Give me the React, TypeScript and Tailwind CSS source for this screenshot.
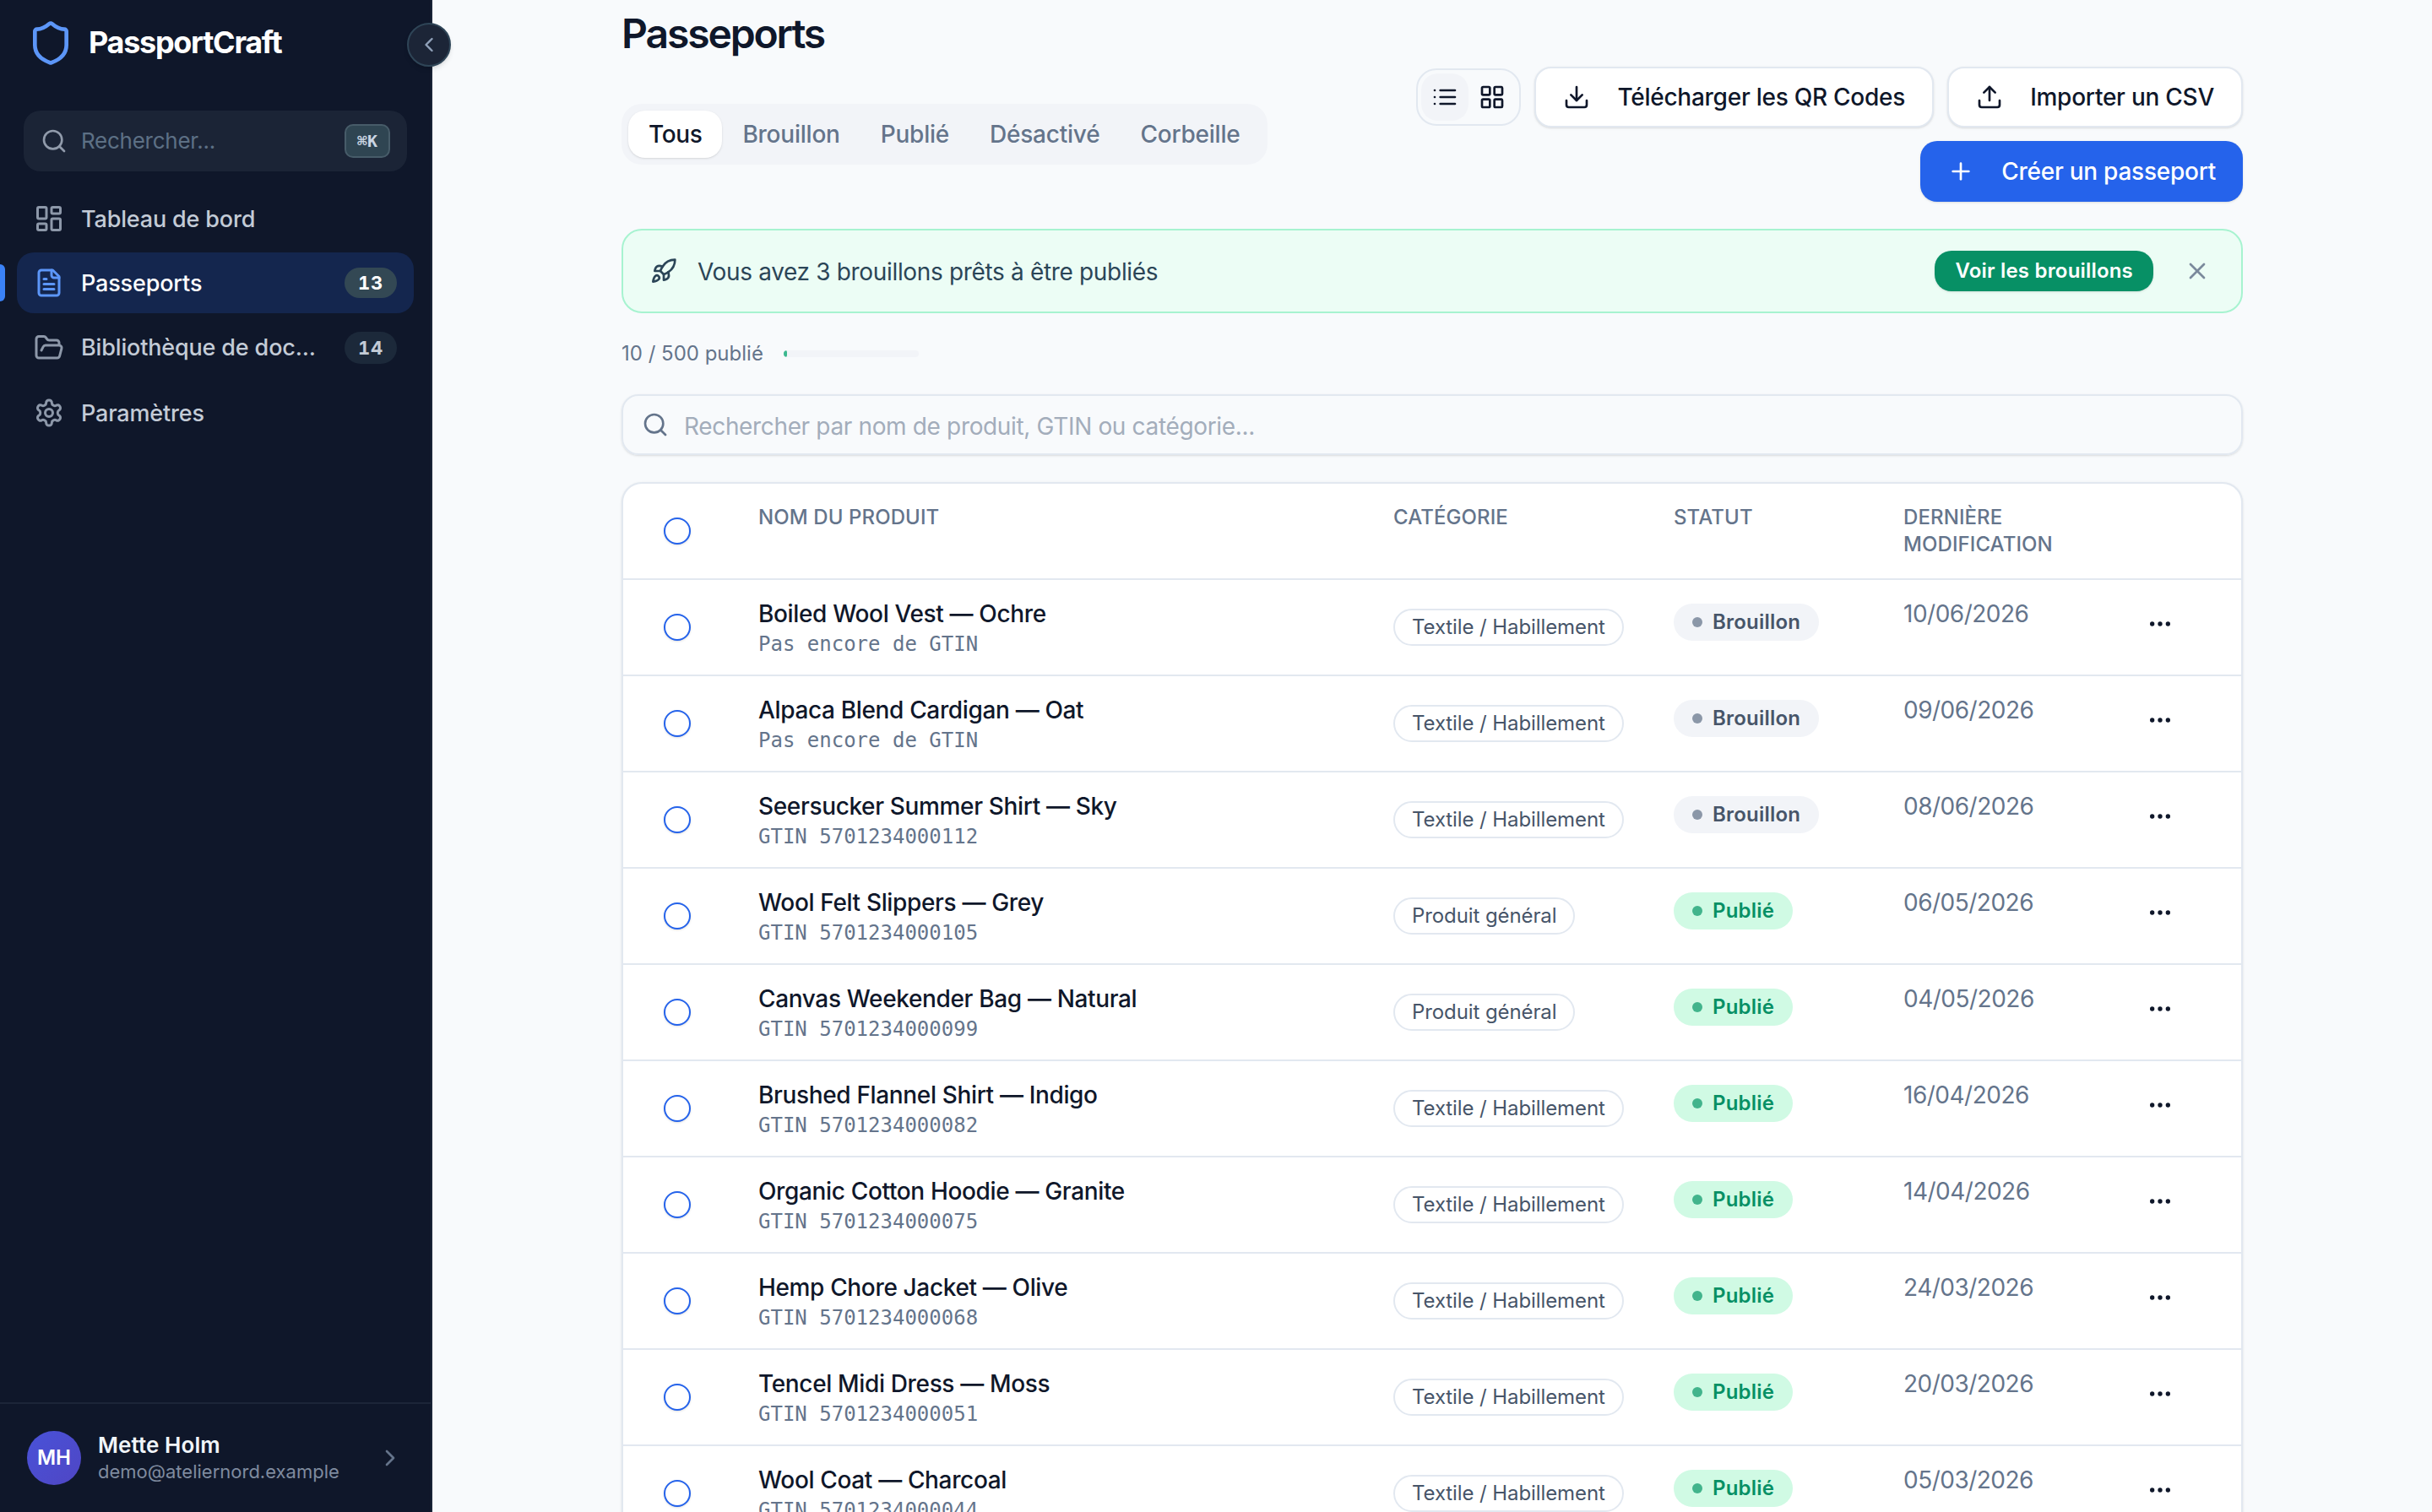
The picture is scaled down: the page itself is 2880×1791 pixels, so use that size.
import type { SVGProps } from "react";
import {
  ChevronLeft,
  ChevronRight,
  Download,
  Ellipsis,
  FolderOpen,
  LayoutDashboard,
  LayoutGrid,
  Plus,
  Rocket,
  Search,
  Shield,
  Upload,
  X,
} from "lucide-react";
import clsx from "clsx";

interface NavItem {
  label: string;
  icon: React.ElementType;
  count?: number;
  active?: boolean;
  tall?: boolean;
}

interface Passport {
  name: string;
  gtin?: string;
  category: string;
  published: boolean;
  updatedAt: string;
}

function StrokeIcon(props: SVGProps<SVGSVGElement>) {
  return (
    <svg
      viewBox="0 0 24 24"
      fill="none"
      stroke="currentColor"
      strokeWidth="2"
      strokeLinecap="round"
      strokeLinejoin="round"
      {...props}
    />
  );
}

function ListIcon({ className }: { className?: string }) {
  return (
    <StrokeIcon className={className}>
      <path d="M8 6h13M8 12h13M8 18h13M3 6h.01M3 12h.01M3 18h.01" />
    </StrokeIcon>
  );
}

function FileTextIcon({ className }: { className?: string }) {
  return (
    <StrokeIcon className={className}>
      <path d="M15 2H6a2 2 0 0 0-2 2v16a2 2 0 0 0 2 2h12a2 2 0 0 0 2-2V7Z" />
      <path d="M14 2v4a2 2 0 0 0 2 2h4M10 9H8M16 13H8M16 17H8" />
    </StrokeIcon>
  );
}

function SettingsIcon({ className }: { className?: string }) {
  return (
    <StrokeIcon className={className}>
      <path d="M12.22 2h-.44a2 2 0 0 0-2 2v.18a2 2 0 0 1-1 1.73l-.43.25a2 2 0 0 1-2 0l-.15-.08a2 2 0 0 0-2.73.73l-.22.38a2 2 0 0 0 .73 2.73l.15.1a2 2 0 0 1 1 1.72v.51a2 2 0 0 1-1 1.74l-.15.09a2 2 0 0 0-.73 2.73l.22.38a2 2 0 0 0 2.73.73l.15-.08a2 2 0 0 1 2 0l.43.25a2 2 0 0 1 1 1.73V20a2 2 0 0 0 2 2h.44a2 2 0 0 0 2-2v-.18a2 2 0 0 1 1-1.73l.43-.25a2 2 0 0 1 2 0l.15.08a2 2 0 0 0 2.73-.73l.22-.39a2 2 0 0 0-.73-2.73l-.15-.08a2 2 0 0 1-1-1.74v-.5a2 2 0 0 1 1-1.74l.15-.09a2 2 0 0 0 .73-2.73l-.22-.38a2 2 0 0 0-2.73-.73l-.15.08a2 2 0 0 1-2 0l-.43-.25a2 2 0 0 1-1-1.73V4a2 2 0 0 0-2-2z" />
      <circle cx="12" cy="12" r="3" />
    </StrokeIcon>
  );
}

const TEXTILE = "Textile / Habillement";
const GENERAL = "Produit général";

const navItems: NavItem[] = [
  { label: "Tableau de bord", icon: LayoutDashboard },
  { label: "Passeports", icon: FileTextIcon, count: 13, active: true },
  { label: "Bibliothèque de doc...", icon: FolderOpen, count: 14, tall: true },
  { label: "Paramètres", icon: SettingsIcon },
];

const tabs = ["Tous", "Brouillon", "Publié", "Désactivé", "Corbeille"];

const passports: Passport[] = [
  { name: "Boiled Wool Vest — Ochre", category: TEXTILE, published: false, updatedAt: "10/06/2026" },
  { name: "Alpaca Blend Cardigan — Oat", category: TEXTILE, published: false, updatedAt: "09/06/2026" },
  { name: "Seersucker Summer Shirt — Sky", gtin: "5701234000112", category: TEXTILE, published: false, updatedAt: "08/06/2026" },
  { name: "Wool Felt Slippers — Grey", gtin: "5701234000105", category: GENERAL, published: true, updatedAt: "06/05/2026" },
  { name: "Canvas Weekender Bag — Natural", gtin: "5701234000099", category: GENERAL, published: true, updatedAt: "04/05/2026" },
  { name: "Brushed Flannel Shirt — Indigo", gtin: "5701234000082", category: TEXTILE, published: true, updatedAt: "16/04/2026" },
  { name: "Organic Cotton Hoodie — Granite", gtin: "5701234000075", category: TEXTILE, published: true, updatedAt: "14/04/2026" },
  { name: "Hemp Chore Jacket — Olive", gtin: "5701234000068", category: TEXTILE, published: true, updatedAt: "24/03/2026" },
  { name: "Tencel Midi Dress — Moss", gtin: "5701234000051", category: TEXTILE, published: true, updatedAt: "20/03/2026" },
  { name: "Wool Coat — Charcoal", gtin: "5701234000044", category: TEXTILE, published: true, updatedAt: "05/03/2026" },
];

function Sidebar() {
  return (
    <aside className="relative flex h-full w-[512px] shrink-0 flex-col border-r-2 border-[#1a2437] bg-[#0f172a]">
      <div className="flex h-[102px] items-center gap-[17px] pl-8">
        <Shield className="size-14 text-[#5c96f8]" />
        <span className="pb-0.5 text-[36px] font-bold tracking-[-0.036em] text-white">PassportCraft</span>
      </div>
      <button className="absolute top-[27px] -right-6 flex size-[52px] items-center justify-center rounded-full border-2 border-[#2f4557] bg-[#1c2537] text-slate-400 shadow-md">
        <ChevronLeft className="size-7" />
      </button>

      <div className="mt-[29px] mr-7 ml-7 flex h-[72px] items-center gap-4 rounded-[20px] bg-[#1b2436] px-5">
        <Search className="size-8 text-[#919bab]" />
        <span className="flex-1 pb-0.5 text-[26px] tracking-[-0.01em] text-[#5d7085]">Rechercher...</span>
        <kbd className="flex h-10 w-[54px] items-center justify-center rounded-[10px] border-2 border-[#475c69] bg-[#2f4552] font-['DejaVu_Sans_Mono',monospace] text-[20px] font-bold text-slate-300">
          ⌘K
        </kbd>
      </div>

      <nav className="mt-5 flex flex-col gap-1 px-5">
        {navItems.map(({ label, icon: Icon, count, active, tall }) => (
          <a
            key={label}
            className={clsx(
              "relative flex items-center gap-5 rounded-[20px] px-5 text-[27px] font-medium tracking-[-0.006em]",
              tall ? "h-[74px]" : "h-[72px]",
              active ? "bg-[#14264e] text-white" : "text-[#c3cbd6]",
            )}
          >
            {active && <span className="absolute top-[14px] -left-5 h-11 w-1.5 rounded-r-md bg-[#3b82f6]" />}
            <Icon className={clsx("size-9 shrink-0", active ? "text-[#5c96f8]" : "text-[#8d98a9]")} />
            <span className={clsx("flex-1 whitespace-nowrap", tall ? "pt-px" : "pt-[3px]")}>{label}</span>
            {count !== undefined && (
              <span
                className={clsx(
                  "flex w-[62px] shrink-0 items-center justify-center rounded-full text-[22px] font-bold tracking-[0.03em] tabular-nums",
                  active ? "h-9 bg-[#334854] text-white" : "h-[38px] bg-[#1c293a] text-[#c3cbd6]",
                )}
              >
                {count}
              </span>
            )}
          </a>
        ))}
      </nav>

      <div className="mt-auto flex h-[130px] items-center gap-5 border-t-2 border-[#1c2538] pr-8 pl-8">
        <div className="flex size-16 items-center justify-center rounded-full bg-linear-to-br from-[#4852d8] to-[#4f46c4] text-[24px] font-semibold text-white">
          MH
        </div>
        <div className="flex-1">
          <div className="text-[26px] leading-[32px] font-semibold tracking-[0.003em] text-slate-100">Mette Holm</div>
          <div className="text-[22px] leading-[30px] text-[#7f8b9f]">demo@ateliernord.example</div>
        </div>
        <ChevronRight className="size-8 text-[#64748b]" />
      </div>
    </aside>
  );
}

function Toolbar() {
  const outline =
    "flex h-[72px] items-center gap-8 rounded-[20px] border-2 border-slate-200 bg-white px-8 text-[28px] font-medium tracking-[-0.009em] text-[#0f172a] shadow-sm";

  return (
    <div className="flex flex-col items-end gap-4">
      <div className="flex items-center gap-4">
        <div className="flex rounded-3xl border-2 border-slate-200 p-1 text-[#0f172a]">
          <button className="flex size-14 items-center justify-center rounded-[20px] bg-[#f2f4f8]">
            <ListIcon className="size-8" />
          </button>
          <button className="flex size-14 items-center justify-center rounded-[20px]">
            <LayoutGrid className="size-8" />
          </button>
        </div>
        <button className={outline}>
          <Download className="size-8" />
          Télécharger les QR Codes
        </button>
        <button className={outline}>
          <Upload className="size-8" />
          Importer un CSV
        </button>
      </div>
      <button className="flex h-[72px] items-center gap-8 rounded-[20px] bg-[#2563eb] px-8 text-[28px] font-medium tracking-[-0.009em] text-white shadow-sm">
        <Plus className="size-8" />
        Créer un passeport
      </button>
    </div>
  );
}

function StatusBadge({ published }: { published: boolean }) {
  return (
    <span
      className={clsx(
        "flex h-11 w-fit items-center gap-3 rounded-full px-[22px] text-[24px] font-semibold tracking-[0.009em]",
        published ? "bg-[#d0fae4] text-[#079065]" : "bg-[#f2f4f8] text-[#475569]",
      )}
    >
      <span className={clsx("size-3 rounded-full", published ? "bg-[#42b48c]" : "bg-[#8b97a8]")} />
      {published ? "Publié" : "Brouillon"}
    </span>
  );
}

const columns = "grid grid-cols-[160px_752px_332px_272px_288px_1fr]";
const checkbox = "size-8 rounded-full border-2 border-[#2563eb] bg-white shadow-sm";

function PassportTable() {
  return (
    <div className="mt-8 overflow-hidden rounded-t-3xl border-2 border-b-0 border-slate-200 bg-white shadow-sm">
      <div
        className={clsx(
          columns,
          "h-[114px] border-b-2 border-slate-200 pt-6 text-[24px] leading-[32px] font-medium tracking-[0.004em] text-[#64748b] uppercase",
        )}
      >
        <div className="pt-4 pl-12">
          <div className={checkbox} />
        </div>
        <div>Nom du produit</div>
        <div>Catégorie</div>
        <div>Statut</div>
        <div>
          Dernière
          <br />
          modification
        </div>
      </div>
      {passports.map((p) => (
        <div key={p.name} className={clsx(columns, "h-[114px] border-b-2 border-slate-200")}>
          <div className="pt-10 pl-12">
            <div className={checkbox} />
          </div>
          <div className="pt-5">
            <div className="text-[28px] leading-[40px] font-medium tracking-[-0.0125em] text-[#0f172a]">{p.name}</div>
            <div className="font-['DejaVu_Sans_Mono',monospace] text-[24px] leading-[32px] text-[#64748b]">
              {p.gtin ? `GTIN ${p.gtin}` : "Pas encore de GTIN"}
            </div>
          </div>
          <div className="pt-[34px]">
            <span className="flex h-11 w-fit items-center rounded-full border-2 border-slate-200 px-5 text-[24px] tracking-[-0.004em] text-[#475569]">
              {p.category}
            </span>
          </div>
          <div className="pt-7">
            <StatusBadge published={p.published} />
          </div>
          <div className="pt-5 text-[28px] leading-[40px] tracking-[-0.018em] text-[#64748b]">{p.updatedAt}</div>
          <div className="pt-9 text-[#0f172a]">
            <Ellipsis className="size-8" />
          </div>
        </div>
      ))}
    </div>
  );
}

export default function App() {
  return (
    <div className="flex h-[1791px] w-[2880px] overflow-hidden bg-[#f8fafc] font-['Inter',sans-serif]">
      <Sidebar />
      <main className="flex-1">
        <div className="mx-auto w-[1920px]">
          <div className="flex h-[239px] justify-between">
            <div>
              <h1 className="mt-2 text-[48px] leading-[64px] font-semibold tracking-[-0.044em] text-[#0f172a]">Passeports</h1>
              <div className="mt-[51px] flex h-[72px] items-center rounded-3xl bg-[#f2f4f8] p-2 text-[28px] font-medium tracking-[-0.008em] text-[#64748b]">
                {tabs.map((tab, i) => (
                  <button
                    key={tab}
                    className={clsx("h-14 rounded-[20px] px-6", i === 0 && "bg-white tracking-[-0.014em] text-[#0f172a] shadow-sm")}
                  >
                    {tab}
                  </button>
                ))}
              </div>
            </div>
            <div className="pt-[79px]">
              <Toolbar />
            </div>
          </div>

          <div className="mt-8 flex h-[100px] items-center rounded-3xl border-2 border-[#a7f3d0] bg-[#ecfdf5] px-8 text-[28px] text-[#2b4557]">
            <Rocket className="mr-6 size-8" />
            <span className="flex-1 pt-px tracking-[-0.012em]">Vous avez 3 brouillons prêts à être publiés</span>
            <button className="h-12 rounded-[20px] bg-[#079065] px-6 text-[24px] font-semibold tracking-[0.008em] text-white shadow-sm">
              Voir les brouillons
            </button>
            <X className="mr-1 ml-9 size-8 text-[#7b8a9c]" />
          </div>

          <div className="mt-8 flex h-8 items-center gap-6 text-[24px] text-[#64748b]">
            10 / 500 publié
            <div className="h-2 w-40 overflow-hidden rounded-full bg-[#f2f4f8]">
              <div className="h-full w-1 rounded-full bg-[#3cb88f]" />
            </div>
          </div>

          <div className="mt-8 flex h-[72px] items-center gap-[18px] rounded-[20px] border-2 border-slate-200 px-[22px] text-[28px] tracking-[-0.0125em] text-[#a3adbb] shadow-sm">
            <Search className="size-8 text-[#64748b]" />
            <span className="pt-[3px]">Rechercher par nom de produit, GTIN ou catégorie...</span>
          </div>

          <PassportTable />
        </div>
      </main>
    </div>
  );
}
